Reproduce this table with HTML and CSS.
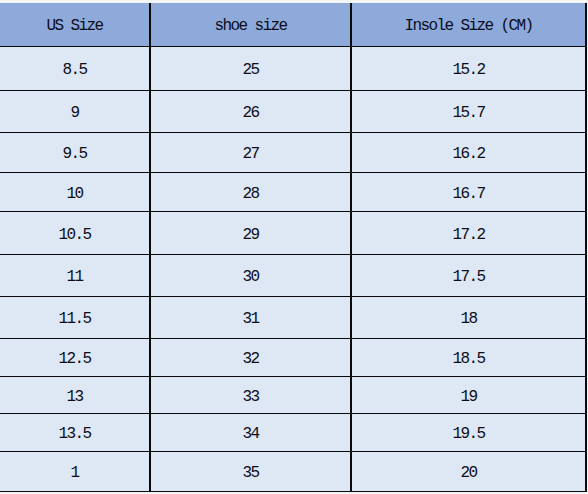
FILE: index.html
```html
<!DOCTYPE html>
<html>
<head>
<meta charset="utf-8">
<link rel="stylesheet" href="styles.css">
</head>
<body>
<div class="sheet">
<table class="size-table">
  <colgroup><col class="c1"><col class="c2"><col class="c3"></colgroup>
  <thead>
    <tr class="head"><th>US Size</th><th>shoe size</th><th>Insole Size (CM)</th></tr>
  </thead>
  <tbody>
    <tr class="h44"><td>8.5</td><td>25</td><td>15.2</td></tr>
    <tr class="h42"><td>9</td><td>26</td><td>15.7</td></tr>
    <tr class="h40"><td>9.5</td><td>27</td><td>16.2</td></tr>
    <tr class="h39"><td>10</td><td>28</td><td>16.7</td></tr>
    <tr class="h43"><td>10.5</td><td>29</td><td>17.2</td></tr>
    <tr class="h42"><td>11</td><td>30</td><td>17.5</td></tr>
    <tr class="h42"><td>11.5</td><td>31</td><td>18</td></tr>
    <tr class="h38"><td>12.5</td><td>32</td><td>18.5</td></tr>
    <tr class="h37"><td>13</td><td>33</td><td>19</td></tr>
    <tr class="h38"><td>13.5</td><td>34</td><td>19.5</td></tr>
    <tr class="h40"><td>1</td><td>35</td><td>20</td></tr>
  </tbody>
</table>
</div>
</body>
</html>
```
FILE: styles.css
```css
html, body {
  margin: 0;
  padding: 0;
  background: #f4f5f7;
}
.sheet {
  padding-top: 3px;
  background: #f4f5f7;
  width: 588px;
  height: 494px;
  overflow: hidden;
}
.size-table {
  border-collapse: collapse;
  table-layout: fixed;
  width: 586px;
  font-family: "Liberation Mono", monospace;
  font-size: 16px;
  letter-spacing: -1.6px;
  color: #0d0d1a;
}
.c1 { width: 150px; }
.c2 { width: 201px; }
.c3 { width: 235px; }
.size-table th,
.size-table td {
  padding: 4px 0 0 0;
  text-align: center;
  font-weight: normal;
  border-bottom: 1px solid #0a0a0a;
  border-right: 2px solid #0a0a0a;
  background: #dde8f4;
}
.size-table th {
  background: #8eaadb;
}
.head { height: 43px; }
.h44 { height: 44px; }
.h43 { height: 43px; }
.h42 { height: 42px; }
.h40 { height: 40px; }
.h39 { height: 39px; }
.h38 { height: 38px; }
.h37 { height: 37px; }
```
